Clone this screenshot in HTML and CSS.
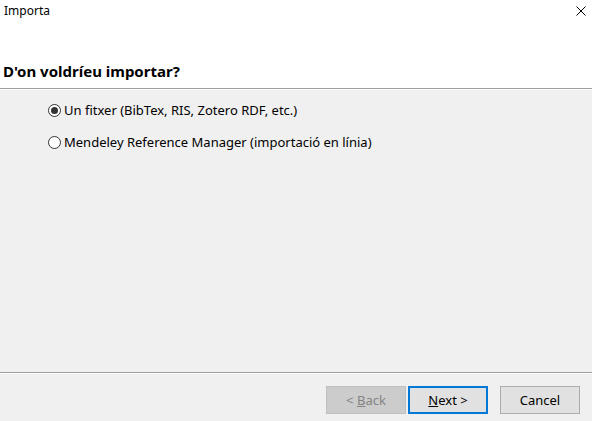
FILE: index.html
```html
<!DOCTYPE html>
<html>
<head>
<meta charset="utf-8">
<link rel="stylesheet" href="styles.css">
</head>
<body>
<div class="win">
  <div class="top">
    <div class="titlebar">
      <span class="title">Importa</span>
      <svg class="close" width="10" height="10" viewBox="0 0 10 10"><path d="M0.5 0.5L9.5 9.5M9.5 0.5L0.5 9.5" stroke="#000" stroke-width="1" fill="none"/></svg>
    </div>
    <h1 class="heading">D'on voldríeu importar?</h1>
  </div>
  <div class="content">
    <label class="radio"><span class="dot checked"></span><span>Un fitxer (BibTex, RIS, Zotero RDF, etc.)</span></label>
    <label class="radio"><span class="dot"></span><span>Mendeley Reference Manager (importació en línia)</span></label>
  </div>
  <div class="footer">
    <button class="btn disabled">&lt; <u>B</u>ack</button>
    <button class="btn default"><u>N</u>ext &gt;</button>
    <button class="btn cancel">Cancel</button>
  </div>
</div>
</body>
</html>
```
FILE: styles.css
```css
html, body { margin: 0; padding: 0; }
body { width: 592px; height: 421px; overflow: hidden; font-family: "Noto Sans", "Open Sans", sans-serif; font-size: 13px; color: #000; background: #f0f0f0; }
.win { display: flex; flex-direction: column; height: 421px; }
.top { background: #fff; height: 88px; border-bottom: 1px solid #a0a0a0; box-sizing: content-box; display: flex; flex-direction: column; }
.titlebar { display: flex; justify-content: space-between; align-items: flex-start; height: 30px; padding: 3px 6px 0 4px; }
.title { font-size: 12px; line-height: 16px; }
.close { margin-top: 3px; margin-right: 0; }
.heading { margin: 28px 0 0 3px; font-size: 15px; font-weight: bold; line-height: 20px; }
.content { flex: 1; display: flex; flex-direction: column; gap: 14px; padding: 11px 0 0 48px; border-top: 1px solid #fff; }
.radio { display: flex; align-items: center; gap: 3px; line-height: 18px; }
.dot { width: 11px; height: 11px; border: 1px solid #333; border-radius: 50%; background: #fff; position: relative; display: inline-block; }
.dot.checked::after { content: ""; position: absolute; left: 2px; top: 2px; width: 7px; height: 7px; border-radius: 50%; background: #333; }
.footer { height: 49px; border-top: 1px solid #a0a0a0; box-shadow: inset 0 1px 0 #fff; display: flex; padding: 13px 0 0 326px; gap: 2px; box-sizing: border-box; }
.btn { width: 80px; height: 28px; box-sizing: border-box; font-family: inherit; font-size: 13px; border: 1px solid #adadad; background: #e1e1e1; color: #000; padding: 0; }
.btn.disabled { background: #cccccc; border-color: #bfbfbf; color: #838383; }
.btn.default { border: 2px solid #0078d7; }
.btn.cancel { margin-left: 10px; }
```
